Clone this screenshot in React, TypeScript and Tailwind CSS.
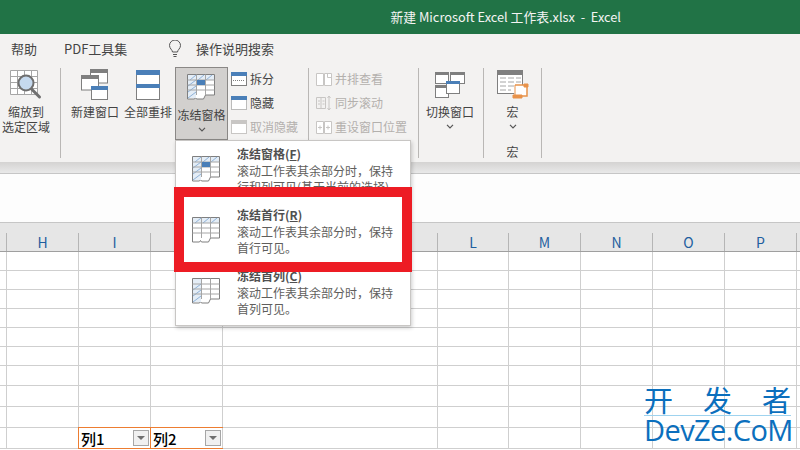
import type { ReactNode } from 'react'

const CJK = "font-['Noto_Sans_CJK_SC','Open_Sans',sans-serif]"

// column K is dragged wide in the sheet, everything else is default width
const columns = [
  { name: 'H', width: 'w-[72px]' },
  { name: 'I', width: 'w-[72px]' },
  { name: 'J', width: 'w-[72px]' },
  { name: 'K', width: 'w-[215px]' },
  { name: 'L', width: 'w-[71px]' },
  { name: 'M', width: 'w-[72px]' },
  { name: 'N', width: 'w-[72px]' },
  { name: 'O', width: 'w-[72px]' },
  { name: 'P', width: 'w-[72px]' },
]

const rowHeights = ['h-[19px]', 'h-[19px]', 'h-[19px]', 'h-[19px]', 'h-[19px]', 'h-[19px]', 'h-[20px]', 'h-[21px]', 'h-[21px]']

function FreezeIcon({ mode }: { mode: 'pane' | 'row' | 'col' }) {
  const hatch = 'M1 6 L7 1 M9 6 L15 1 M17 6 L23 1'
  const side = 'M1 12 L9 6 M1 18 L9 12 M1 24 L9 18'
  return (
    <svg width="29" height="27" viewBox="0 0 29 27" fill="none">
      <path d="M.5.5h27v20.500h-9l-2 4h-7l-1-1.500-1 1.500h-7z" fill="#fff" stroke="#7f7f7f" />
      {mode !== 'col' && <rect x="1" y="1" width="26" height="5" fill="#e4edf6" />}
      {mode !== 'row' && <rect x="1" y="1" width="8" height="23" fill="#e4edf6" />}
      {mode !== 'col' && <path d={hatch} stroke="#8fb2d8" strokeWidth="1" transform="translate(2 0)" />}
      {mode !== 'row' && <path d={side} stroke="#8fb2d8" strokeWidth="1" />}
      <path d="M.5 6h27M.5 11h27M.5 16h27M9.500 .5v20.500M18.500 .5v20.500" stroke="#a6a6a6" />
      {mode === 'pane' && <rect x="10" y="6" width="8" height="5" fill="#4a7fb8" />}
    </svg>
  )
}

function NewWindowIcon() {
  return (
    <svg width="28" height="31" viewBox="0 0 28 31" fill="none">
      <rect x="9.500" y="1" width="17" height="13" fill="#fff" stroke="#7f7f7f" />
      <rect x="9" y="0" width="18" height="4" fill="#7f7f7f" />
      <rect x=".5" y="7" width="17" height="14" fill="#fff" stroke="#7f7f7f" />
      <rect x="0" y="6" width="18" height="4" fill="#7f7f7f" />
      <rect x="10.500" y="18" width="16" height="12.500" fill="#fff" stroke="#7f7f7f" />
      <rect x="10" y="17" width="17" height="4" fill="#4a7fb8" />
    </svg>
  )
}

function ArrangeIcon() {
  return (
    <svg width="24" height="30" viewBox="0 0 24 30" fill="none">
      <rect x=".5" y=".5" width="23" height="29" fill="#fff" stroke="#7f7f7f" />
      <rect x="0" y="0" width="24" height="5" fill="#4a7fb8" />
      <rect x="0" y="14" width="24" height="4" fill="#4a7fb8" />
    </svg>
  )
}

function ZoomIcon() {
  return (
    <svg width="32" height="30" viewBox="0 0 32 30" fill="none">
      <path d="M.5.5h27v24h-27zM.5 6.500h27M.5 12.500h27M.5 18.500h27M7.500 .5v24M14.500 .5v24M21.500 .5v24" stroke="#a6a6a6" fill="#fff" />
      <circle cx="16" cy="13" r="7.500" fill="#c5d9ee" stroke="#6f6f6f" strokeWidth="2" />
      <path d="M21.500 19l8 8" stroke="#6f6f6f" strokeWidth="3" strokeLinecap="round" />
    </svg>
  )
}

function SwitchIcon() {
  return (
    <svg width="30" height="26" viewBox="0 0 30 26" fill="none">
      <rect x=".5" y=".5" width="13" height="11" fill="#fff" stroke="#7f7f7f" />
      <rect x="0" y="0" width="14" height="3" fill="#7f7f7f" />
      <rect x="15.500" y=".5" width="14" height="11" fill="#fff" stroke="#7f7f7f" />
      <rect x="15" y="0" width="15" height="3" fill="#7f7f7f" />
      <rect x=".5" y="13.500" width="13" height="12" fill="#fff" stroke="#7f7f7f" />
      <rect x="0" y="13" width="14" height="3" fill="#7f7f7f" />
      <rect x="11.500" y="9.500" width="13" height="12" fill="#fff" stroke="#7f7f7f" />
      <rect x="11" y="9" width="14" height="3" fill="#4a7fb8" />
    </svg>
  )
}

function MacroIcon() {
  return (
    <svg width="32" height="29" viewBox="0 0 32 29" fill="none">
      <rect x=".5" y=".5" width="25" height="23" fill="#fff" stroke="#7f7f7f" />
      <rect x="0" y="0" width="26" height="5" fill="#7f7f7f" />
      <path d="M3 8h6M11 8h6M19 8h5M3 12h6M11 12h6M19 12h5M3 16h6M11 16h6M3 20h6M11 20h3" stroke="#a6a6a6" />
      <path d="M18 15h12v11H17" fill="#fff" stroke="#e8924a" strokeWidth="1.500" />
      <path d="M18 15v12M16 25h9v3h-9zM27 14h4v3h-4z" stroke="#e8924a" fill="#e8924a" />
    </svg>
  )
}

function SmallIcon({ kind }: { kind: string }) {
  if (kind === 'split') {
    return (
      <svg width="16" height="14" viewBox="0 0 16 14" fill="none">
        <rect x=".5" y=".5" width="15" height="13" fill="#fff" stroke="#7f7f7f" />
        <rect x="0" y="0" width="16" height="4" fill="#4a7fb8" />
        <path d="M2 8.500h12" stroke="#7f7f7f" strokeDasharray="1 1" />
      </svg>
    )
  }
  if (kind === 'hide') {
    return (
      <svg width="16" height="14" viewBox="0 0 16 14" fill="none">
        <rect x=".5" y=".5" width="15" height="13" fill="#fff" stroke="#7f7f7f" strokeDasharray="1 1" />
        <rect x="0" y="0" width="16" height="4" fill="#4a7fb8" />
      </svg>
    )
  }
  if (kind === 'unhide') {
    return (
      <svg width="16" height="14" viewBox="0 0 16 14" fill="none">
        <rect x=".5" y=".5" width="15" height="13" fill="#fff" stroke="#c8c6c4" />
        <rect x="0" y="0" width="16" height="4" fill="#c8c6c4" />
      </svg>
    )
  }
  if (kind === 'side') {
    return (
      <svg width="16" height="14" viewBox="0 0 16 14" fill="none" stroke="#c8c6c4">
        <path d="M.5 1.500h7v12h-7zM8.500 1.500h7v12h-7z" fill="#fff" />
        <path d="M11.500 1.500v4h4" />
      </svg>
    )
  }
  if (kind === 'sync') {
    return (
      <svg width="16" height="16" viewBox="0 0 16 16" fill="none" stroke="#c8c6c4">
        <path d="M.5 2.500h9v11h-9zM5 2.500v11M2 6h2M2 9h2M6.500 6h2M6.500 9h2M13 1v14M11.500 3L13 1l1.500 2M11.500 13l1.500 2 1.500-2" />
      </svg>
    )
  }
  return (
    <svg width="16" height="14" viewBox="0 0 16 14" fill="none" stroke="#c8c6c4">
      <path d="M.5 1.500h7v12h-7zM8.500 1.500h7v12h-7zM2 7.500h4M4 5.500v4M10 7.500h4M12 5.500v4" fill="#fff" />
    </svg>
  )
}

function Chevron() {
  return (
    <svg width="8" height="5" viewBox="0 0 8 5" fill="none">
      <path d="M1 .8l3 3 3-3" stroke="#555" strokeWidth="1.200" />
    </svg>
  )
}

function Separator() {
  return <div className="mt-[4px] h-[90px] w-px shrink-0 bg-[#b9b7b5]" />
}

function BigButton({
  icon,
  lines,
  chevron,
  width,
}: {
  icon: ReactNode
  lines: string[]
  chevron?: boolean
  width: string
}) {
  return (
    <div className={`flex h-[73px] shrink-0 flex-col items-center pt-[4px] ${width}`}>
      <div className="flex h-[33px] items-center justify-center">{icon}</div>
      <div className="mt-[3px] text-center text-[12px] leading-[15px] text-[#444]">
        {lines.map((l) => (
          <div key={l} className="whitespace-nowrap">
            {l}
          </div>
        ))}
      </div>
      {chevron && (
        <div className="mt-[5px]">
          <Chevron />
        </div>
      )}
    </div>
  )
}

function SmallButton({ kind, label, muted }: { kind: string; label: string; muted?: boolean }) {
  return (
    <div className="flex h-[24px] items-center gap-[3px]">
      <div className="flex w-[16px] justify-center">
        <SmallIcon kind={kind} />
      </div>
      <span className={`whitespace-nowrap text-[12px] ${muted ? 'text-[#b3b0ad]' : 'text-[#444]'}`}>{label}</span>
    </div>
  )
}

function MenuItem({
  mode,
  title,
  hotkey,
  lines,
}: {
  mode: 'pane' | 'row' | 'col'
  title: string
  hotkey: string
  lines: string[]
}) {
  return (
    <div className="flex h-[61px] pl-[16px]">
      <div className="mt-[14px] w-[45px] shrink-0">
        <FreezeIcon mode={mode} />
      </div>
      <div className="pt-[3px] text-[12px] leading-[16px] text-[#605e5c]">
        <div className="mb-[1px] font-bold leading-[17px] text-[#505050]">
          {title}(<span className="underline">{hotkey}</span>)
        </div>
        {lines.map((l) => (
          <div key={l} className="whitespace-nowrap">
            {l}
          </div>
        ))}
      </div>
    </div>
  )
}

function FilterCell({ label }: { label: string }) {
  return (
    <div className="-mr-px -mt-px flex h-[22px] w-[73px] shrink-0 items-center justify-between border border-[#ed7d31] pl-[2px] pr-[1px]">
      <span className="text-[15px] font-medium leading-none text-black">{label}</span>
      <div className="flex h-[16px] w-[16px] items-center justify-center border border-[#a6a6a6] bg-[#f0f0f0]">
        <div className="h-0 w-0 border-x-[4px] border-t-[4px] border-x-transparent border-t-[#6f6f6f]" />
      </div>
    </div>
  )
}

export default function App() {
  return (
    <div className={`relative flex h-[450px] w-[800px] flex-col overflow-hidden bg-white ${CJK}`}>
      <div className="flex h-[34px] shrink-0 items-center justify-end bg-[#217346] pr-[179px] text-[12.800px] text-[#f4f4f4]">
        <span className="whitespace-pre">新建 Microsoft Excel 工作表.xlsx  -  Excel</span>
      </div>

      <div className="flex h-[30px] shrink-0 items-center bg-[#f3f2f1] pl-[11px] text-[13px] text-[#444]">
        <span className="w-[53px]">帮助</span>
        <span className="w-[104px]">PDF工具集</span>
        <svg className="mr-[14px]" width="14" height="18" viewBox="0 0 14 18" fill="none" stroke="#555">
          <path d="M4.500 12c0-2-3-3.500-3-6.500a5.500 5.500 0 0 1 11 0c0 3-3 4.500-3 6.500zM5 14.500h4M5.500 16.500h3" />
        </svg>
        <span>操作说明搜索</span>
      </div>

      <div className="flex h-[98px] shrink-0 items-start bg-[#f3f2f1]">
        <div className="flex w-[60px] shrink-0 justify-start">
          <BigButton width="w-[52px]" icon={<ZoomIcon />} lines={['缩放到', '选定区域']} />
        </div>
        <Separator />
        <div className="flex shrink-0 pl-[7px]">
          <BigButton width="w-[54px]" icon={<NewWindowIcon />} lines={['新建窗口']} />
          <BigButton width="w-[52px]" icon={<ArrangeIcon />} lines={['全部重排']} />
          <div className="ml-[1px] mt-[3px] flex h-[73px] w-[53px] flex-col items-center border border-[#8a8886] bg-[#d2d0ce] pt-[3px]">
            <div className="flex h-[33px] items-center">
              <FreezeIcon mode="pane" />
            </div>
            <div className="mt-[3px] whitespace-nowrap text-[12px] leading-[15px] text-[#444]">冻结窗格</div>
            <div className="mt-[5px]">
              <Chevron />
            </div>
          </div>
        </div>
        <div className="flex w-[80px] shrink-0 flex-col pl-[3px] pt-[3px]">
          <SmallButton kind="split" label="拆分" />
          <SmallButton kind="hide" label="隐藏" />
          <SmallButton kind="unhide" label="取消隐藏" muted />
        </div>
        <Separator />
        <div className="flex w-[109px] shrink-0 flex-col pl-[7px] pt-[3px]">
          <SmallButton kind="side" label="并排查看" muted />
          <SmallButton kind="sync" label="同步滚动" muted />
          <SmallButton kind="reset" label="重设窗口位置" muted />
        </div>
        <Separator />
        <div className="flex w-[64px] shrink-0 justify-center pr-[2px]">
          <BigButton width="w-[54px]" icon={<SwitchIcon />} lines={['切换窗口']} chevron />
        </div>
        <Separator />
        <div className="flex w-[57px] shrink-0 flex-col items-center">
          <BigButton width="w-[40px]" icon={<MacroIcon />} lines={['宏']} chevron />
          <div className="mt-[7px] text-[12px] leading-[15px] text-[#444]">宏</div>
        </div>
        <Separator />
      </div>

      <div className="h-[12px] shrink-0 border-b border-[#c6c6c6] bg-gradient-to-b from-[#d4d3d2] to-[#e9e9e9]" />

      <div className="h-[49px] shrink-0 border-b border-[#c6c6c6] bg-[#fdfdfd]" />

      <div className="flex h-[29px] shrink-0 items-end border-b border-[#9f9f9f] bg-[#e6e6e6] pl-[6px]">
        {columns.map((c) => (
          <div
            key={c.name}
            className={`flex h-[18px] shrink-0 items-center justify-center border-l border-[#b5b5b5] text-[14px] leading-none text-[#1f5f9f] ${c.width}`}
          >
            {c.name}
          </div>
        ))}
        <div className="h-[18px] flex-1 border-l border-[#b5b5b5]" />
      </div>

      <div className="flex flex-col">
        {rowHeights.map((h, row) => (
          <div key={row} className={`flex shrink-0 border-b border-[#cfcfcf] pl-[6px] ${h}`}>
            {columns.map((c) => (
              <div key={c.name} className={`shrink-0 border-l border-[#cfcfcf] ${c.width}`} />
            ))}
            <div className="flex-1 border-l border-[#cfcfcf]" />
          </div>
        ))}
        <div className="flex h-[21px] shrink-0 border-b border-[#cfcfcf] pl-[6px]">
          <div className="w-[72px] shrink-0 border-l border-[#cfcfcf]" />
          <FilterCell label="列1" />
          <FilterCell label="列2" />
          {columns.slice(3).map((c) => (
            <div key={c.name} className={`shrink-0 border-l border-[#cfcfcf] ${c.width}`} />
          ))}
          <div className="flex-1 border-l border-[#cfcfcf]" />
        </div>
      </div>

      {/* dropdown under 冻结窗格 */}
      <div className="absolute left-[175px] top-[140px] h-[186px] w-[236px] border border-[#c8c6c4] bg-white pt-[1px] shadow-[1px_2px_4px_rgba(0,0,0,0.2)]">
        <MenuItem mode="pane" title="冻结窗格" hotkey="F" lines={['滚动工作表其余部分时，保持', '行和列可见(基于当前的选择)。']} />
        <MenuItem mode="row" title="冻结首行" hotkey="R" lines={['滚动工作表其余部分时，保持', '首行可见。']} />
        <MenuItem mode="col" title="冻结首列" hotkey="C" lines={['滚动工作表其余部分时，保持', '首列可见。']} />
      </div>

      {/* red highlight drawn over the screenshot */}
      <div className="absolute left-[174px] top-[187px] h-[85px] w-[238px] border-[10px] border-[#ed1c24]" />

      {/* site watermark */}
      <div className="absolute left-[644px] top-[384px] w-[147px] text-[#0b6fbd]">
        <div className="flex justify-between border-b border-[#9fd3ef] text-[29px] leading-[31px]">
          <span>开</span>
          <span>发</span>
          <span>者</span>
        </div>
        <div className="whitespace-nowrap font-['Open_Sans',sans-serif] text-[29px] leading-[27px] tracking-[-0.6px]">DevZe.CoM</div>
      </div>
    </div>
  )
}
